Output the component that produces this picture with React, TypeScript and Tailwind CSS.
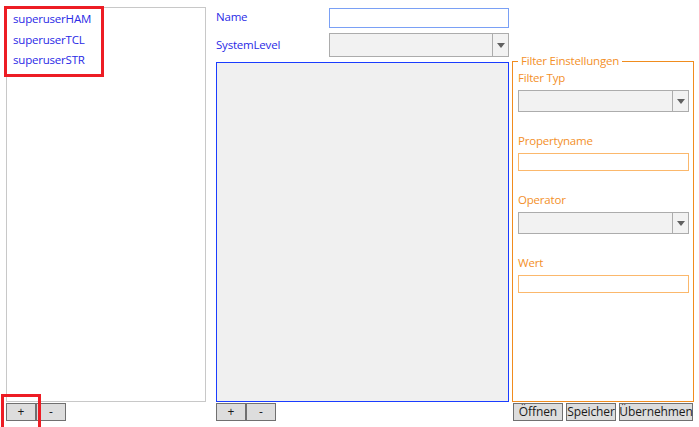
import React from "react";

const users = ["superuserHAM", "superuserTCL", "superuserSTR"];

function Arrow() {
  return (
    <svg width="8" height="5" viewBox="0 0 8 5">
      <path d="M0 0 H8 L4 5 Z" fill="#606060" />
    </svg>
  );
}

function Combo({ className }: { className: string }) {
  return (
    <div className={`flex bg-[#f2f2f2] border border-[#acacac] ${className}`}>
      <div className="flex-1" />
      <div className="w-[16px] border-l border-[#acacac] flex items-center justify-center">
        <Arrow />
      </div>
    </div>
  );
}

function Btn({ label, className }: { label: string; className: string }) {
  return (
    <button
      className={`h-[18px] bg-[#dddddd] border border-[#707070] text-[12px] tracking-[-0.1px] leading-[16px] text-[#1a1a1a] flex items-center justify-center ${className}`}
    >
      {label}
    </button>
  );
}

export default function App() {
  return (
    <div
      className="relative w-[699px] h-[427px] bg-white flex overflow-hidden text-[11.5px] leading-[16px] tracking-[-0.2px]"
      style={{ fontFamily: '"Open Sans", "Noto Sans", sans-serif' }}
    >
      {/* user list */}
      <div className="pl-[6px] pt-[7px] flex flex-col">
        <div className="w-[200px] h-[395px] border border-[#c8c8c8] pt-[3px] pl-[6px] flex flex-col gap-[4.5px]">
          {users.map((u) => (
            <div key={u} className="text-[#2a2ae6]">
              {u}
            </div>
          ))}
        </div>
        <div className="flex mt-[1px]">
          <Btn label="+" className="w-[30px]" />
          <Btn label="-" className="w-[30px]" />
        </div>
      </div>

      {/* middle */}
      <div className="ml-[10px] w-[293px] pt-[8px] flex flex-col">
        <div className="flex h-[20px] items-center">
          <div className="w-[113px] text-[#2a2ae6] -mt-[2px]">Name</div>
          <div className="flex-1 h-[20px] border border-[#7aa0f5] bg-white" />
        </div>
        <div className="flex h-[24px] items-center mt-[5px]">
          <div className="w-[113px] text-[#2a2ae6] -mt-[1px]">SystemLevel</div>
          <Combo className="flex-1 h-[24px]" />
        </div>
        <div className="mt-[5px] h-[340px] border border-[#1a3cff] bg-[#f0f0f0]" />
        <div className="flex mt-[1px]">
          <Btn label="+" className="w-[30px]" />
          <Btn label="-" className="w-[30px]" />
        </div>
      </div>

      {/* filter */}
      <div className="ml-[3px] w-[182px] pt-[53px] flex flex-col">
        <fieldset className="h-[349px] border border-[#f08c1e] pl-[5px] pr-[4px] text-[#f39029]">
          <legend className="px-[3px] leading-[16px]">Filter Einstellungen</legend>
          <div className="mt-[1px] h-[16px]">Filter Typ</div>
          <Combo className="mt-[4px] h-[22px]" />
          <div className="mt-[21px] h-[16px]">Propertyname</div>
          <div className="mt-[4px] h-[18px] border border-[#fbb86c] bg-white" />
          <div className="mt-[21px] h-[16px]">Operator</div>
          <Combo className="mt-[4px] h-[22px]" />
          <div className="mt-[21px] h-[16px]">Wert</div>
          <div className="mt-[4px] h-[18px] border border-[#fbb86c] bg-white" />
        </fieldset>
        <div className="flex mt-[1px] pl-[1px] gap-[3px]">
          <Btn label="Öffnen" className="w-[50px]" />
          <Btn label="Speicher" className="w-[50px]" />
          <Btn label="Übernehmen" className="w-[74px]" />
        </div>
      </div>

      {/* red highlight annotations */}
      <div className="absolute left-[4px] top-[6px] w-[100px] h-[71px] border-[3px] border-[#ed1c24]" />
      <div className="absolute left-[1px] top-[394px] w-[40px] h-[36px] border-[3px] border-[#ed1c24]" />
    </div>
  );
}
